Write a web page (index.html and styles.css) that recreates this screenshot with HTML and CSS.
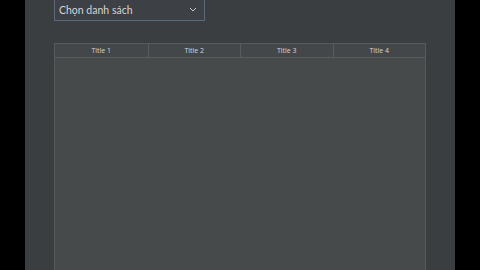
FILE: index.html
```html
<!DOCTYPE html>
<html lang="vi">
<head>
  <meta charset="UTF-8">
  <title>Danh sách</title>
  <link rel="stylesheet" href="styles.css">
</head>
<body>
  <div id="page">
    <div class="select-box">
      <span class="select-text">Chọn danh sách</span>
      <svg class="chevron" width="8" height="5" viewBox="0 0 8 5"><path d="M1 1l3 3 3-3" fill="none" stroke="#c8cacc" stroke-width="1"/></svg>
    </div>

    <div class="grid">
      <div class="grid-head">
        <div class="col">Title 1</div>
        <div class="col">Title 2</div>
        <div class="col">Title 3</div>
        <div class="col">Title 4</div>
      </div>
      <div class="grid-body"></div>
    </div>
  </div>
</body>
</html>
```

FILE: styles.css
```css
html {
  padding: 0;
  margin: 0;
  background: #000;
}
body {
  margin: 0;
  padding: 0 25px;
  height: 270px;
  overflow: hidden;
  font-family: "Open Sans", "Noto Sans", sans-serif;
  color: #d4d6d8;
}

#page {
  height: 270px;
  background: #3b3e41;
  padding: 0 29px;
  display: flex;
  flex-direction: column;
}

.select-box {
  width: 151px;
  height: 23px;
  margin-top: -2px;
  border: 1px solid #5d6878;
  background: #3d4044;
  display: flex;
  align-items: center;
  padding: 0 0 0 4px;
  box-sizing: border-box;
  flex-shrink: 0;
}
.select-text {
  font-family: "Lato", "Open Sans", sans-serif;
  font-size: 10.5px;
  flex-grow: 1;
  padding-top: 1px;
}
.chevron {
  margin-right: 7px;
}

.grid {
  margin-top: 22px;
  width: 372px;
  flex-grow: 1;
  border: 1px solid #57595b;
  border-bottom: none;
  background: #474a4b;
  display: flex;
  flex-direction: column;
  box-sizing: border-box;
}
.grid-head {
  display: grid;
  grid-template-columns: repeat(4, 1fr);
  height: 14px;
  box-sizing: border-box;
  background: #44474a;
  border-bottom: 1px solid #5a5d5f;
}
.grid-head .col {
  font-size: 7px;
  text-align: center;
  line-height: 13px;
  border-left: 1px solid #585b5d;
}
.grid-head .col:first-child {
  border-left: none;
}
.grid-body {
  flex-grow: 1;
}
```
